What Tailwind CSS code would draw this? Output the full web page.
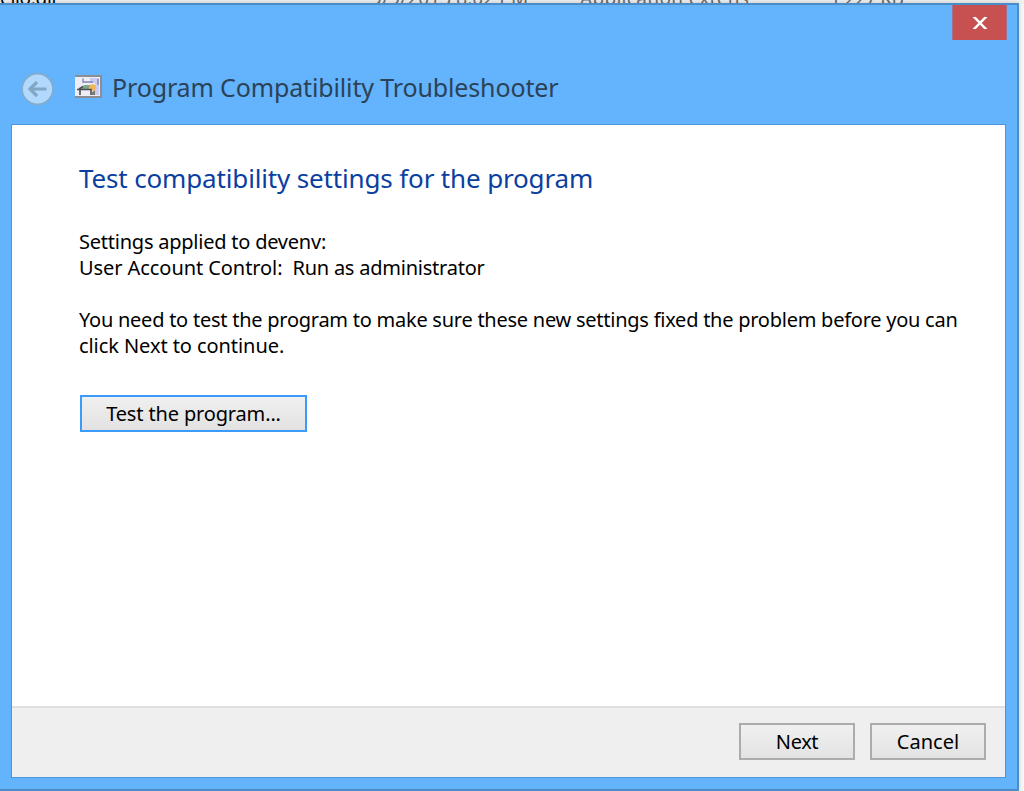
<!DOCTYPE html>
<html lang="en">
<head>
<meta charset="utf-8">
<title>Program Compatibility Troubleshooter</title>
<script src="https://cdn.jsdelivr.net/npm/@tailwindcss/browser@4"></script>
</head>
<body class="relative h-[791px] w-[1024px] overflow-hidden bg-[#fafafa] font-['Noto_Sans','Open_Sans',sans-serif] text-black">
<div class="absolute inset-x-0 top-0 h-[4px] overflow-hidden bg-[#f2f2f2] text-[19px] leading-[26px] whitespace-nowrap text-[#6d6d6d]">
  <span class="absolute -top-[15px] left-0 tracking-[-0.3px] text-black">ello.dll</span>
  <span class="absolute -top-[15px] left-[371px] tracking-[0.1px]">9/9/2013 8:02 PM</span>
  <span class="absolute -top-[15px] left-[580px] tracking-[0.3px]">Application extens</span>
  <span class="absolute -top-[15px] left-[830px] tracking-[-0.5px]">1 227 KB</span>
</div>
<main class="relative mt-[3px] flex h-[788px] w-[1019px] flex-col border-t-2 border-r-2 border-b-2 border-[#4b8dc9] bg-[#64b3fd] pr-[11px] pb-[11px] pl-[11px] shadow-[0_0_6px_rgba(0,0,0,0.2)]">
  <div class="-mr-px flex h-[35px] justify-end">
    <button class="flex h-[35px] w-[55px] items-center justify-center border-x border-[#a8708f] bg-[#c75050]" aria-label="Close">
      <svg width="16" height="14" viewBox="0 0 16 14" fill="none" stroke="#fff"><path d="M1 1.7H4M12 1.7H15M1 12.3H4M12 12.3H15" stroke-width="1.3"/><path d="M2.8 1.6L13.2 12.4M13.2 1.6L2.8 12.4" stroke-width="2.3"/></svg>
    </button>
  </div>
  <header class="flex h-[84px] shrink-0 items-start pt-[28px] pl-[10px]">
    <svg class="mt-[4px] shrink-0" width="34" height="34" viewBox="0 0 34 34"><circle cx="16.5" cy="17" r="15.4" fill="#b1d9fd" stroke="#85abcb" stroke-width="1.6"/><path d="M25.5 17H9M16 10L9 17L16 24" fill="none" stroke="#82a7c5" stroke-width="3.2"/></svg>
    <svg class="mt-[7px] ml-[20px] shrink-0" width="27" height="24" viewBox="0 0 27 24"><path d="M0 0H27V23H0Z" fill="#8c8d93"/><path d="M0 2H25V21H0Z" fill="#edeef5"/><path d="M15 3H24V20H20V8H15Z" fill="#cacbf0"/><path d="M8 3.5V7H18M23 4V10" fill="none" stroke="#8584b6" stroke-width="1.4"/><path d="M9 10H16L14 14H6Z" fill="#81a78b"/><circle cx="17.5" cy="12.5" r="3.3" fill="#efb557"/><path d="M2 14.5H16V20M5 14V20M4 14L8 11.5" fill="none" stroke="#4c4d50" stroke-width="1.6"/><path d="M16 18L20 15V20H16Z" fill="#777"/></svg>
    <h1 class="ml-[10px] text-[25px] leading-[39px] tracking-[-0.14px] whitespace-nowrap text-[#2b4257]">Program Compatibility Troubleshooter</h1>
  </header>
  <section class="flex min-h-0 w-[995px] flex-1 flex-col border border-[#4c97dc] bg-white">
    <div class="flex-1 pt-[35px] pl-[67px] text-[20px] leading-[26px] whitespace-nowrap">
      <h2 class="text-[26px] leading-[36px] tracking-[-0.15px] text-[#0b3f9f]">Test compatibility settings for the program</h2>
      <p class="mt-[33px]"><span class="tracking-[-0.23px]">Settings applied to devenv:</span><br><span class="tracking-[-0.07px]">User Account Control:</span><span class="tracking-[-0.23px] whitespace-pre">  Run as administrator</span></p>
      <p class="mt-[26px]"><span class="tracking-[-0.25px]">You need to test the program to make sure these new settings fixed the problem before you can</span><br><span class="tracking-[-0.07px]">click Next to continue.</span></p>
      <button class="mt-[36px] ml-[1px] flex h-[37px] w-[227px] items-center justify-center border-2 border-[#3b9bfa] bg-linear-to-b from-[#f0f0f0] to-[#e2e2e2] tracking-[-0.15px]">Test the program...</button>
    </div>
    <footer class="flex h-[71px] shrink-0 items-start justify-end gap-[15px] border-t-2 border-[#dfdfdf] bg-[#efefef] pt-[15px] pr-[19px] text-[20px] leading-[26px]">
      <button class="flex h-[37px] w-[116px] items-center justify-center border-2 border-[#acacac] bg-linear-to-b from-[#f0f0f0] to-[#e3e3e3] tracking-[-0.4px]">Next</button>
      <button class="flex h-[37px] w-[116px] items-center justify-center border-2 border-[#acacac] bg-linear-to-b from-[#f0f0f0] to-[#e3e3e3]">Cancel</button>
    </footer>
  </section>
</main>
</body>
</html>
